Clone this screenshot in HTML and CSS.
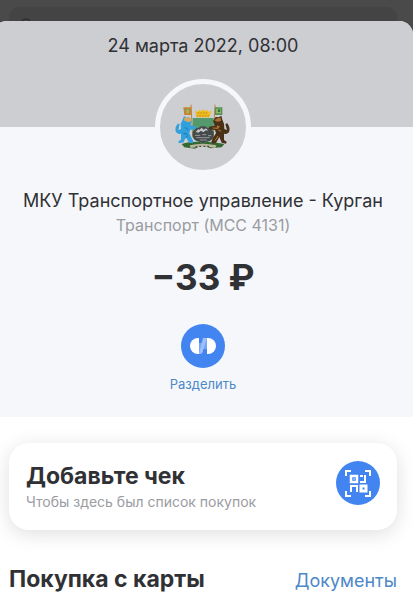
FILE: index.html
```
<!DOCTYPE html>
<html lang="ru">
<head>
    <meta charset="UTF-8">
    <meta name="viewport" content="width=device-width, initial-scale=1.0">
    <title>Операция</title>
    <link rel="stylesheet" href="styles.css">
</head>
<body>

<div class="backdrop">
    <div class="search">
        <svg class="search-icon" viewBox="0 0 14 14" width="14" height="14" fill="none" stroke="#2e2e33" stroke-width="1.5">
            <circle cx="6" cy="6" r="5"/>
            <path d="M10 10l4 4"/>
        </svg>
    </div>
</div>

<main class="sheet">
    <header class="sheet-header">
        <time class="date" datetime="2022-03-24T08:00">24 марта 2022, 08:00</time>
    </header>

    <section class="summary">
        <div class="avatar">
            <!-- герб Кургана -->
            <svg class="emblem" viewBox="0 0 168 138" width="56" height="46">
                <path d="M20 120q20-8 62-7t66 7l-8 10-34 3-16-6H74l-14 7-32-4z" fill="#35692f"/>
                <path d="M44 124q38-10 80 0l-3 8q-35-7-74 0z" fill="#b9b79b"/>
                <path d="M62 128h5m6-1h5m8 0h5m6 0h5" stroke="#444" stroke-width="4"/>
                <path d="M48 2l5 98M120 2l-5 98" stroke="#b98736" stroke-width="3"/>
                <path d="M25 10h24v23H28z" fill="#c9822f"/>
                <path d="M30 15h15v13H31z" fill="#6fa36a"/>
                <path d="M34 28v-8l4-5 4 5v8z" fill="#e0a33c"/>
                <path d="M120 10h22v23h-22z" fill="#4f9159"/>
                <path d="M124 14h14v14h-14z" fill="#b7c46a"/>
                <path d="M128 16h8v9h-8z" fill="#2f7543"/>
                <path d="M60 20l8 3 5-5 6 3 5-5 6 5 5-3 6 5 8-3-5 20H65z" fill="#efbc1f"/>
                <path d="M65 36h39M68 27h32" stroke="#a9741c" stroke-width="2" stroke-dasharray="5 3"/>
                <path d="M53 42h63v52q0 17-21 20l-11 5-10-5q-21-3-21-20z" fill="#54996b"/>
                <path d="M53 84l10-11 8-2 8-4 10 0 10 5 7 1 10 11v10q0 15-21 19l-11 5-10-5q-21-4-21-20z" fill="#45494b"/>
                <path d="M62 84l8-9 3 3 7-7 6 6 7-4 7 7-7-1-8 6-7-5-8 6z" fill="#c3c8ca"/>
                <path d="M60 94h16m6-2h12m5 3h10M64 101h40M74 108h22" stroke="#94999b" stroke-width="3"/>
                <path d="M23 47l4-11 7 5 9-2 7 12-3 13 15 3v8l-16 2-3 11 5 10 7 14-2 6-11-2-10-18-6 17-14 3-2-6 8-5V89q-12 4-16-7-3-12 6-23l6 1-4 18 8-3-1-16z" fill="#31a1dd"/>
                <path d="M27 41l9 0 7-2 7 11-8 5-14-5z" fill="#d8a663"/>
                <path d="M29 70l11 8M25 87l12 4M30 104l9-10" stroke="#1776ad" stroke-width="3"/>
                <path d="M142 47l-3-12-8 5-9-1-8 12 5 14-17 3v8l18 2 3 10-8 12-6 13 3 6 11-2 10-18 7 17 13 3 2-6-8-5V89q12 4 16-7 3-12-6-24l-6 2 5 18-8-3-1-16z" fill="#493018"/>
                <path d="M137 41l-10 2-9 6 8 4 12-2zM126 64l10 4-11 8m0 12l12 3" fill="#aa7130"/>
                <path d="M113 72l17 1M129 96l-9 14M139 82l-9-4" stroke="#b27a33" stroke-width="3"/>
            </svg>
        </div>
        <h1 class="merchant">МКУ Транспортное управление - Курган</h1>
        <p class="category">Транспорт (MCC 4131)</p>
        <p class="amount">−33 ₽</p>
        <button type="button" class="split">
            <svg class="round-icon" viewBox="0 0 44 44" width="44" height="44">
                <circle cx="22" cy="22" r="22" fill="#4285f1"/>
                <path d="M18 30V19q4 0 4-1 0-4 4-4v11q-4 0-4 1 0 4-4 4z" fill="#75a6f7"/>
                <path d="M18 30l4-16h4l-4 12q0 4-4 4z" fill="#9cc0fa"/>
                <path d="M17 14a8 8 0 0 0 0 16h1V14z" fill="#fff"/>
                <path d="M27 14a8 8 0 0 1 0 16h-1V14z" fill="#fff"/>
            </svg>
            <span>Разделить</span>
        </button>
    </section>

    <section class="details">
        <button type="button" class="receipt">
            <span class="receipt-text">
                <span class="receipt-title">Добавьте чек</span>
                <span class="receipt-hint">Чтобы здесь был список покупок</span>
            </span>
            <svg class="round-icon" viewBox="0 0 44 44" width="44" height="44">
                <circle cx="22" cy="22" r="22" fill="#4285f1"/>
                <g fill="none" stroke="#fff" stroke-width="2">
                    <path d="M10 15v-5h5M29 10h5v5M34 30v5h-5M15 35h-5v-5"/>
                    <path d="M15 15h6v6h-6z" stroke-width="2.500"/>
                    <path d="M25 25h5v5h-5z" stroke-width="3"/>
                    <path d="M29 14v7h-5M24 15h3M15 31v-6h6v6"/>
                </g>
                <path d="M17 17h2v2h-2z" fill="#8db6f8"/>
            </svg>
        </button>

        <div class="payment">
            <h2 class="payment-title">Покупка с карты</h2>
            <a href="#" class="documents">Документы</a>
        </div>
    </section>
</main>

</body>
</html>
```
FILE: styles.css
```
* {
    box-sizing: border-box;
}

body {
    display: flex;
    flex-direction: column;
    min-height: 100vh;
    margin: 0;
    background: #4a4a4a;
    color: #303135;
    font-family: Inter, "Noto Sans", sans-serif;
    overflow-x: hidden;
}

h1, h2, p {
    margin: 0;
}

button {
    border: none;
    padding: 0;
    font-family: inherit;
    color: inherit;
    cursor: pointer;
}

.backdrop {
    flex: none;
    height: 21px;
    padding: 7px 16px 0 9px;
    overflow: hidden;
}

.search {
    height: 36px;
    padding: 11px;
    border-radius: 10px;
    background: #444445;
}

.search-icon {
    display: block;
}

/* the sheet runs past the left edge of the screen */
.sheet {
    flex: 1;
    margin-left: -7px;
    border-radius: 14px 14px 0 0;
    background: #fff;
    overflow: hidden;
}

.sheet-header {
    height: 106px;
    padding-top: 13px;
    background: #cdced2;
    text-align: center;
}

.date {
    font-size: 18px;
    line-height: 24px;
    font-weight: 400;
}

.summary {
    display: flex;
    flex-direction: column;
    align-items: center;
    padding-bottom: 25px;
    background: #f6f7fa;
    text-align: center;
}

.avatar {
    display: flex;
    align-items: center;
    justify-content: center;
    width: 96px;
    height: 96px;
    margin-top: -48px;
    border: 5px solid #f6f7fa;
    border-radius: 50%;
    background: #cdced2;
}

.merchant {
    margin-top: 14px;
    font-size: 18px;
    line-height: 24px;
    font-weight: 400;
}

.category {
    font-size: 16px;
    line-height: 24px;
    color: #9a9ca2;
}

.amount {
    margin-top: 18px;
    font-size: 35px;
    line-height: 44px;
    font-weight: 700;
}

.split {
    display: flex;
    flex-direction: column;
    align-items: center;
    gap: 8px;
    margin-top: 25px;
    background: none;
    color: #4d88c9;
    font-size: 13px;
    line-height: 16px;
}

.round-icon {
    display: block;
    flex: none;
}

.details {
    padding: 26px 16px 0;
}

.receipt {
    display: flex;
    align-items: flex-start;
    justify-content: space-between;
    width: 100%;
    padding: 18px 17px 17px;
    border-radius: 20px;
    background: #fff;
    box-shadow: 0 4px 20px rgba(0, 0, 0, 0.13);
    text-align: left;
}

.receipt-text {
    display: flex;
    flex-direction: column;
}

.receipt-title {
    font-size: 23px;
    line-height: 30px;
    font-weight: 700;
}

.receipt-hint {
    font-size: 14px;
    line-height: 22px;
    color: #9a9ca2;
}

.payment {
    display: flex;
    align-items: baseline;
    justify-content: space-between;
    padding: 34px 0 4px;
}

.payment-title {
    font-size: 23px;
    line-height: 30px;
    font-weight: 700;
}

.documents {
    font-size: 18px;
    line-height: 24px;
    color: #4d88c9;
    text-decoration: none;
}
```
